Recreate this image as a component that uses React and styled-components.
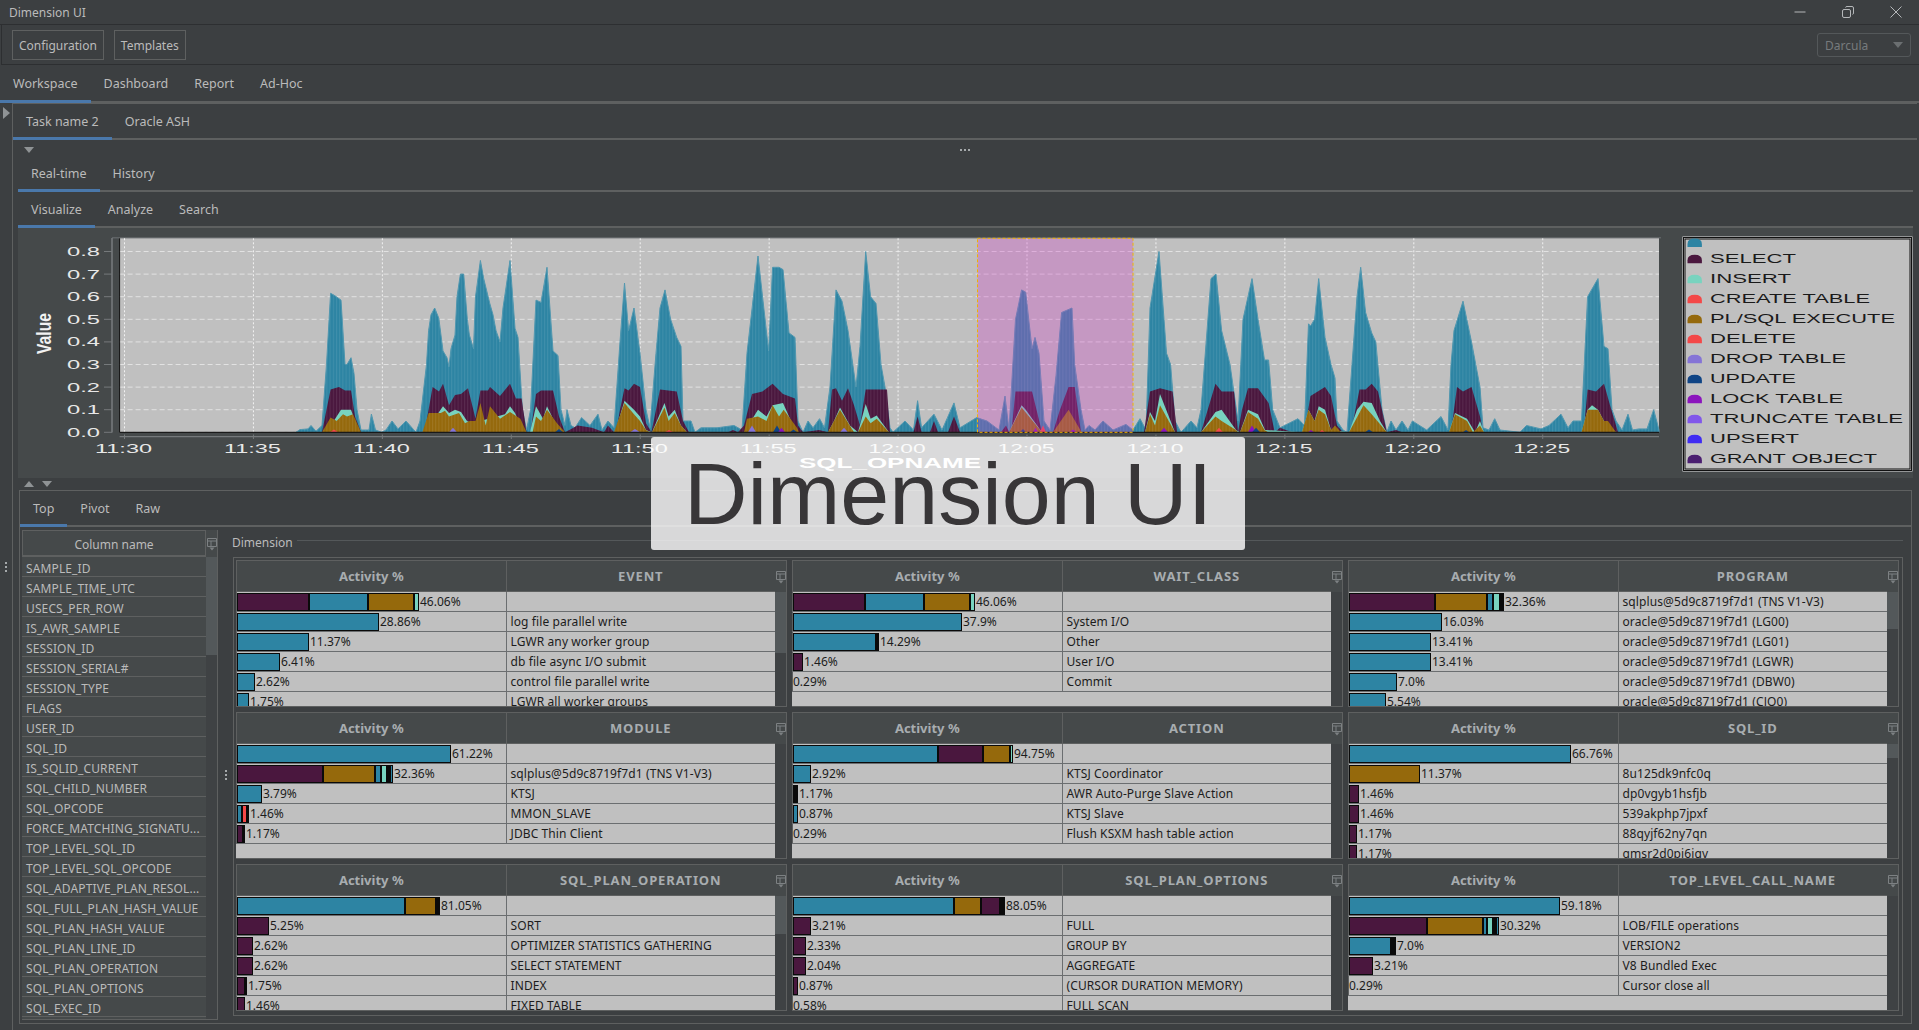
import React from "react";
import styled, { createGlobalStyle } from "styled-components";

const LINE = "#5e6060";
const TEXT = "#bbbbbb";
const COLORS = {
  T: "#2d84a3",
  P: "#4a173e",
  M: "#78d3bf",
  R: "#f44848",
  O: "#95690c",
  D: "#8574d6",
  U: "#0f4485",
  L: "#8b14bd",
  C: "#8157ea",
  S: "#3f2bf2",
  G: "#4a1e70",
  K: "#0a0a0a",
};

const GlobalStyle = createGlobalStyle`
  html, body {
    margin: 0;
    height: 100%;
    background: #3c3f41;
    overflow: hidden;
  }
  * {
    box-sizing: border-box;
  }
`;

const Page = styled.div`
  position: relative;
  display: flex;
  flex-direction: column;
  height: 1030px;
  background: #3c3f41;
  color: ${TEXT};
  font-family: "Noto Sans", sans-serif;
  font-size: 12px;
`;

const TitleBar = styled.div`
  display: flex;
  align-items: center;
  justify-content: space-between;
  height: 25px;
  padding: 0 17px 0 9px;
  border-bottom: 1px solid #2d2f31;
`;

const WindowButtons = styled.div`
  display: flex;
  align-items: center;
  gap: 36px;
`;

const Toolbar = styled.div`
  display: flex;
  align-items: center;
  gap: 10px;
  height: 40px;
  margin-left: 1px;
  padding: 1px 8px 0 10px;
  border-left: 1px solid #2d2f31;
  border-bottom: 1px solid #2d2f31;
`;

const ToolButton = styled.div`
  display: flex;
  align-items: center;
  height: 30px;
  padding: 0 6px;
  border: 1px solid ${LINE};
`;

const Combo = styled.div`
  display: flex;
  align-items: center;
  justify-content: space-between;
  width: 94px;
  height: 24px;
  margin-left: auto;
  padding: 0 7px;
  border: 1px solid #54585a;
  border-radius: 3px;
  color: #777b7d;
`;

const ComboArrow = styled.span`
  width: 0;
  height: 0;
  border-left: 5px solid transparent;
  border-right: 5px solid transparent;
  border-top: 6px solid #6b6f71;
`;

const TabBar = styled.div`
  display: flex;
  flex: none;
  height: ${(p) => p.$h}px;
  margin-top: ${(p) => p.$top || 0}px;
  border-bottom: 2px solid ${LINE};
`;

const Tab = styled.div`
  display: flex;
  align-items: center;
  height: calc(100% + 2px);
  padding: 2px 13px ${(p) => p.$lift || 0}px;
  font-size: 12.5px;
  border-bottom: 3px solid ${(p) => (p.$active ? "#4a78ab" : "transparent")};
`;

const Workspace = styled.div`
  display: flex;
  flex: 1;
  min-height: 0;
`;

const LeftStrip = styled.div`
  display: grid;
  grid-template-rows: 1fr auto 1fr;
  justify-items: center;
  flex: none;
  width: 12px;
`;

const SideArrow = styled.span`
  width: 0;
  height: 0;
  margin-top: 4px;
  border-top: 6px solid transparent;
  border-bottom: 6px solid transparent;
  border-left: 7px solid #8f9395;
`;

const Dots = styled.div`
  display: flex;
  flex-direction: ${(p) => (p.$row ? "row" : "column")};
  gap: 2px;
  align-self: center;
  justify-self: center;
`;

const Dot = styled.span`
  width: 2px;
  height: 2px;
  background: #a5a9ab;
`;

const TaskPanel = styled.div`
  display: flex;
  flex: 1;
  flex-direction: column;
  min-width: 0;
  margin-right: 2px;
  border-left: 1px solid ${LINE};
  border-top: 1px solid ${LINE};
`;

const CollapseRow = styled.div`
  display: grid;
  grid-template-columns: 1fr auto 1fr;
  align-items: center;
  flex: none;
  height: 17px;
  padding-top: 3px;
`;

const CollapseSlot = styled.div`
  padding-left: 11px;
`;

const Triangle = styled.span`
  display: block;
  width: 0;
  height: 0;
  border-left: 5px solid transparent;
  border-right: 5px solid transparent;
  ${(p) =>
    p.$up
      ? "border-bottom: 6px solid #8f9395;"
      : "border-top: 6px solid #8f9395;"}
`;

const Inner = styled.div`
  display: flex;
  flex: 1;
  flex-direction: column;
  min-height: 0;
  padding: 0 4px 0 5px;
`;

const ChartPanel = styled.div`
  flex: none;
  height: 250px;
  background: #45494a;
`;

const ChartSvg = styled.svg`
  display: block;
`;

const SplitStrip = styled.div`
  display: flex;
  align-items: center;
  flex: none;
  gap: 8px;
  height: 12px;
  padding-left: 6px;
`;

const BottomPanel = styled.div`
  display: flex;
  flex-direction: column;
  flex: none;
  height: 534px;
  margin-left: 1px;
  margin-right: 1px;
  border: 1px solid ${LINE};
`;

const BottomBody = styled.div`
  display: flex;
  flex: 1;
  min-height: 0;
  padding: 3px 8px 3px 2px;
`;

const Sidebar = styled.div`
  display: flex;
  flex: none;
  width: 196px;
  border: 1px solid ${LINE};
  border-top: 0;
  border-left: 0;
`;

const ColumnList = styled.div`
  display: flex;
  flex: 1;
  flex-direction: column;
  background: #45494a;
`;

const ColumnHead = styled.div`
  display: flex;
  align-items: center;
  justify-content: center;
  flex: none;
  height: 27px;
  padding-top: 2px;
  border: 1px solid ${LINE};
  border-bottom-width: 2px;
`;

const ColumnRow = styled.div`
  display: flex;
  align-items: center;
  flex: none;
  height: 20px;
  padding: 3px 0 0 4px;
  border-bottom: 1px solid ${LINE};
  letter-spacing: 0.12px;
  white-space: nowrap;
`;

const Scroll = styled.div`
  display: flex;
  flex-direction: column;
  flex: none;
  width: 11px;
  background: #3f4244;
`;

const ScrollCorner = styled.div`
  display: flex;
  align-items: center;
  justify-content: center;
  flex: none;
  height: ${(p) => p.$h}px;
  background: #45494a;
`;

const ScrollThumb = styled.div`
  flex: none;
  height: ${(p) => p.$h}px;
  background: #53585a;
`;

const Splitter = styled.div`
  display: flex;
  align-items: center;
  justify-content: center;
  flex: none;
  width: 15px;
`;

const Dimension = styled.div`
  display: flex;
  flex: 1;
  flex-direction: column;
  min-width: 0;
`;

const LegendRow = styled.div`
  display: flex;
  align-items: center;
  flex: none;
  gap: 4px;
  height: 27px;
  margin-left: -1px;
  padding-bottom: 3px;
  white-space: nowrap;
`;

const LegendLine = styled.span`
  flex: 1;
  height: 1px;
  margin-top: -4px;
  background: #54585a;
`;

const FieldBox = styled.div`
  display: grid;
  flex: none;
  grid-template-columns: repeat(3, 1fr);
  grid-template-rows: repeat(3, 1fr);
  gap: 5px;
  height: 459px;
  padding: 2px 3px 4px 2px;
  border: 1px solid ${LINE};
`;

const Card = styled.div`
  display: flex;
  min-width: 0;
  min-height: 0;
  overflow: hidden;
  border: 1px solid ${LINE};
  border-left: 0;
`;

const CardTable = styled.div`
  display: flex;
  flex: 1;
  flex-direction: column;
  min-width: 0;
  background: #c0c0c0;
`;

const HeaderRow = styled.div`
  display: grid;
  grid-template-columns: 1fr 1fr;
  flex: none;
  height: 31px;
  background: #45494a;
  border-bottom: 1px solid ${LINE};
`;

const HeaderCell = styled.div`
  display: flex;
  align-items: center;
  justify-content: center;
  border-left: 1px solid ${LINE};
  color: #a8adb0;
  font-weight: 700;
  font-size: 13px;
  letter-spacing: ${(p) => (p.$caps ? "0.85px" : "0")};
`;

const DataRow = styled.div`
  display: grid;
  grid-template-columns: 1fr 1fr;
  flex: none;
  height: 20px;
  border-bottom: 1px solid #6b6e70;
`;

const BarCell = styled.div`
  display: flex;
  align-items: center;
  border-left: 1px solid ${LINE};
  color: #1c1c1c;
  white-space: nowrap;
`;

const LabelCell = styled.div`
  display: flex;
  align-items: center;
  padding-left: 4px;
  border-left: 1px solid #6b6e70;
  color: #1c1c1c;
  letter-spacing: 0.1px;
  white-space: nowrap;
`;

const Bar = styled.div`
  display: flex;
  flex: none;
  height: 18px;
  margin-right: 1px;
`;

const Segment = styled.div`
  flex: none;
  width: ${(p) => p.$w}px;
  background: ${(p) => COLORS[p.$c]};
  border: 1px solid #0a0a0a;
`;

const Splash = styled.div`
  position: absolute;
  left: 651px;
  top: 437px;
  display: flex;
  align-items: center;
  justify-content: center;
  width: 594px;
  height: 113px;
  border-radius: 3px;
  background: rgba(255, 255, 255, 0.8);
  color: #383638;
  font-family: "Liberation Sans", sans-serif;
  font-size: 88px;
`;

const teal = [
  296,0, 300,.012, 308,.015, 311,.03, 316,.005, 322,.03, 326.5,.3, 330.6,.615, 334.7,.605, 341,.585, 345,.3, 347,.3, 351,.33, 354,.26, 357,.1, 361,.01, 369,.01, 371.4,.08, 375.5,.01, 381.6,0,
  386,.01, 392,.05, 398,.015, 406,.05, 412,.02, 416,0, 420,.05, 426.5,.3, 428.6,.45, 431,.52, 434.7,.55, 438.8,.505, 443,.36, 447,.33, 449,.29, 451,.37, 455,.43, 457,.6, 460.4,.7, 463.7,.7, 467.3,.5, 469.4,.43, 473.5,.37, 475.5,.6, 480.4,.76, 483.7,.68, 489.8,.57, 493,.52, 496,.45, 500,.4, 503,.55, 510,.76, 515,.46, 518,.42, 522.4,.1, 526.5,.01, 530.6,.1, 536,.585, 541,.575, 547,.73, 553,.36, 558,.34, 561,.1, 565,.03, 567,.1, 571,.03, 575,.02, 581.6,.065, 590,.03, 598,.08, 602,.01, 608,.05, 614,.02,
  620,.4, 624.5,.66, 628.6,.45, 634,.55, 640,.35, 646,.1, 650,.02, 656,.35, 660,.55, 665,.63, 670.6,.5, 676.7,.42, 681,.38, 683,.05, 691,.05, 695,0, 701,.02, 717,.02, 734,.03, 742,.01, 747,.35, 758,.78, 768.6,.36, 772.6,.73, 779,.73, 783,.72, 789,.44, 795,.42, 798,.05, 803,0, 808,.05, 813,.02, 819.6,.06, 824.5,.02, 830,.2, 836,.63, 842,.58, 848,.45, 856,.2, 860,.38, 865.7,.8, 870.6,.6, 876,.57, 881,.3, 885,.2, 890,.02, 893,0,
  905,.05, 913.5,.01, 917.6,.14, 921.6,.02, 934,.08, 942,.01, 954,.13, 960,.02, 976.7,.065, 987,.05, 999,.01, 1005,.16, 1009,.01, 1015.5,.5, 1021.6,.63, 1025.7,.62, 1032,.37, 1035,.42, 1039,.35, 1044,.05, 1050,.01, 1056,.25, 1061.6,.53, 1072,.55, 1074.7,.3, 1081,.1, 1085,.01, 1089,.03, 1095,.01, 1103,.05, 1113,.01, 1126,.035, 1133,.01, 1140,.06, 1146,.01, 1150,.55, 1159,.8, 1166.5,.35, 1170.6,.3, 1175,.05, 1181,0,
  1191,.05, 1197,.02, 1201,.1, 1211,.68, 1216,.7, 1221.6,.45, 1230,.3, 1238,.05, 1243,.5, 1252,.68, 1258,.5, 1264.5,.32, 1268.6,.32, 1272.7,.1, 1280,.02, 1298,.06, 1304.5,.03, 1308.5,.48, 1310.5,.47, 1314.6,.5, 1318.7,.68, 1325,.42, 1331,.3, 1335,.24, 1337,.05, 1343,.01, 1347,0, 1352,.3, 1357,.6, 1360.7,.73, 1365.6,.53, 1371.7,.44, 1375.8,.4, 1382,.1, 1386.8,0, 1391,.05, 1396,.01, 1402,.05, 1408,.01, 1412.4,.05, 1426.7,.01, 1441,.07, 1448,.01, 1451,.3, 1454,.45, 1463,.58, 1471.5,.4, 1480,.2, 1483,.02, 1489,.01, 1494.7,.06, 1500,.01, 1520,0, 1526.5,.03, 1541,.015, 1549,.03, 1561,.08, 1568,.02, 1573,.05, 1581.5,.05, 1587.6,.6, 1598,.68, 1604,.38, 1608,.37, 1612,.1, 1616,.05, 1622,.01, 1628,.08, 1632.5,.01, 1639,.015, 1647,.015, 1653.7,.1, 1659,.01,
];

const purple = [
  322,0, 326.5,.1, 330.6,.19, 339,.2, 345,.185, 351,.185, 355,.07, 361,0,
  424.5,0, 428.6,.1, 432.6,.2, 439,.18, 443,.215, 449,.12, 455,.165, 461,.17, 468,.195, 475.5,.06, 480.4,.185, 488,.185, 490,.2, 500,.16, 510,.215, 516,.15, 521.6,.15, 526.5,0,
  530.6,0, 536,.17, 541,.185, 553,.185, 559,.07, 565,0, 573.5,.02, 577.5,.03, 592,.02, 604,0, 608,.03, 614,0,
  616,0, 620,.1, 624.5,.195, 628.6,.185, 634,.215, 640,.2, 646,.04, 651.4,0, 656,.1, 660,.19, 676.7,.18, 683,.05, 689,0,
  728,0, 733,.01, 738,0, 744,.03, 752,.17, 762.4,.18, 772.6,.215, 783,.17, 795,.15, 798,.03, 803,0, 819,.01, 828,0, 832,.19, 836,.195, 842,.14, 848,.195, 854,.12, 860,.03, 865.7,.19, 887,.19, 890,0,
  913.5,0, 917.6,.07, 921.6,0, 930,0, 934,.05, 938,0, 948,0, 954,.07, 960,0, 1001,0, 1006,.03, 1009,0, 1011.4,0, 1015.5,.18, 1032,.18, 1042,0, 1053,0, 1060,.1, 1068.6,.2, 1074.7,.2, 1081,0,
  1144,0, 1150,.18, 1160,.195, 1172.6,.18, 1177,0, 1201,0, 1215.5,.215, 1221.6,.18, 1234,.18, 1238,0, 1242,.1, 1248,.195, 1258,.195, 1268.6,.13, 1274.7,0, 1280,.02, 1292,0,
  1304.5,0, 1310.5,.16, 1325,.2, 1331,.16, 1337,.03, 1343,0, 1351,0, 1359.5,.19, 1365.6,.19, 1371.7,.215, 1378,.18, 1386.8,0, 1396,.01, 1402,0, 1451,0, 1457,.2, 1463,.18, 1471.5,.2, 1480,.07, 1483,0, 1583.6,0, 1587.6,.19, 1596,.18, 1604,.215, 1610,.12, 1618,0,
];

const mint = [
  326.5,0, 341,.1, 351,.1, 359,0, 426,0, 439,.09, 443,.115, 449,.085, 455,.1, 461,.09, 467,.05, 472,.04, 505,.08, 510,.115, 515,.085, 524,0,
  530,0, 536,.115, 543,.06, 547,.115, 553,.06, 562,0, 615,0, 624.5,.14, 634,.1, 640,.07, 646,.01, 652,0, 664.5,.13, 668.6,.07, 674.7,.1, 681,.03, 687,0,
  744,0, 758,.1, 766.5,.07, 772.6,.12, 783,.13, 791,.05, 798,0, 828,0, 834,.05, 840,.11, 850,.03, 858,0, 865.7,.125, 870.6,.06, 876.7,.075, 889,0,
  1009,0, 1021.6,.12, 1025.7,.1, 1042,0, 1145,0, 1150,.09, 1155,.05, 1160,.17, 1175,0, 1201,0, 1215.5,.09, 1221.6,.1, 1236,.01, 1240,0, 1248,.1, 1258,.08, 1265,.01, 1302,0, 1308.5,.1, 1314.6,.05, 1318.7,.115, 1325,.1, 1331,.01, 1349,0, 1357,.1, 1363.5,.135, 1371.7,.13, 1380,.05, 1386.8,0, 1449,0, 1455,.085, 1467,.06, 1475,0, 1480,.05, 1484,0, 1581.5,0, 1587.6,.1, 1592,.12, 1598,.1, 1604,.05, 1616,0,
];

const orange = [
  322,0, 330.6,.065, 336.7,.05, 343,.08, 347,.07, 353,.08, 361,0, 422.4,0, 428.6,.085, 440.8,.085, 445,.095, 449,.07, 459,.085, 465,.04, 469.4,.05, 475.5,.05, 480.4,.13, 485.7,.03, 490,.115, 500,.06, 510,.09, 520.4,.06, 526.5,0,
  532.6,0, 536,.07, 541,.05, 547,.1, 557,.04, 565,0, 614,0, 624.5,.13, 634,.08, 640,.05, 646,.01, 650,0, 652,0, 664.5,.11, 668.6,.05, 674.7,.085, 681,.03, 687,0,
  744,0, 747,.06, 758,.07, 766.5,.05, 772.6,.12, 779,.07, 783.7,.1, 797,.02, 799,0, 828,0, 840,.1, 854,0, 858,0, 865.7,.07, 870.6,.04, 876.7,.06, 889,0,
  1009,0, 1021.6,.11, 1042,0, 1053,0, 1068.6,.1, 1081.6,0, 1145,0, 1150,.08, 1155,.03, 1160,.12, 1175,0, 1201,0, 1215.5,.07, 1221.6,.05, 1236,.01, 1238,0, 1240,0, 1248,.09, 1258,.06, 1264.5,.01, 1268,0,
  1302,0, 1308.5,.1, 1314.6,.05, 1318.7,.1, 1325,.08, 1331,.01, 1335,.03, 1341,0, 1349,0, 1363.5,.12, 1371.7,.08, 1386.8,0, 1449,0, 1455,.08, 1467,.05, 1473,0, 1480,.03, 1484,0, 1581.5,0, 1587.6,.1, 1598,.1, 1604,.05, 1608,.05, 1616,0,
];

const blips = [
  [330, 8, 0.012, "R"], [449, 8, 0.02, "D"], [555, 8, 0.015, "U"], [630, 10, 0.015, "D"], [665, 8, 0.01, "R"],
  [748, 8, 0.03, "D"], [773, 8, 0.03, "U"], [778, 7, 0.02, "L"], [790, 7, 0.012, "U"], [840, 8, 0.02, "D"],
  [1020, 6, 0.015, "U"], [1033, 5, 0.02, "L"], [1040, 6, 0.03, "R"], [1069, 8, 0.012, "L"], [1160, 8, 0.02, "L"],
  [1215, 8, 0.02, "R"], [1248, 8, 0.03, "L"], [1252, 8, 0.02, "U"], [1319, 6, 0.01, "R"], [1308, 6, 0.01, "L"],
  [1365, 8, 0.012, "U"], [1463, 6, 0.01, "U"],
];

const BASE = 432.3;
const valueY = (v) => BASE - v * 226;

const areaPath = (pts) => {
  let d = `M${pts[0]} ${BASE}`;
  for (let i = 0; i < pts.length; i += 2) {
    d += `L${pts[i]} ${valueY(pts[i + 1]).toFixed(1)}`;
  }
  return `${d}L${pts[pts.length - 2]} ${BASE}Z`;
};

const yTicks = [0, 1, 2, 3, 4, 5, 6, 7, 8];
const xTicks = ["11:30", "11:35", "11:40", "11:45", "11:50", "11:55", "12:00", "12:05", "12:10", "12:15", "12:20", "12:25"];

const legend = [
  ["", "T", 0],
  ["SELECT", "P", 86],
  ["INSERT", "M", 81],
  ["CREATE TABLE", "R", 160],
  ["PL/SQL EXECUTE", "O", 185],
  ["DELETE", "R", 86],
  ["DROP TABLE", "D", 136],
  ["UPDATE", "U", 86],
  ["LOCK TABLE", "L", 133],
  ["TRUNCATE TABLE", "C", 193],
  ["UPSERT", "S", 89],
  ["GRANT OBJECT", "G", 167],
];

const legendBottom = (i) => (i === 0 ? 247 : 263.3 + (i - 1) * 20);

const Chart = () => (
  <ChartSvg width="1895" height="250" viewBox="18 228 1895 250">
    <defs>
      <pattern id="stripes" width="3.2" height="10" patternUnits="userSpaceOnUse">
        <rect width="1" height="10" fill="#fff" opacity="0.09" />
      </pattern>
    </defs>
    <rect x="112" y="237" width="1549" height="1.5" fill="#5f6365" />
    <rect x="119.6" y="238.3" width="1539.4" height="194" fill="#c0c0c0" />
    {yTicks.map((t) => (
      <line key={t} x1="119.6" x2="1659" y1={valueY(t / 10)} y2={valueY(t / 10)} stroke="#e2e2e2" strokeDasharray="5 3" />
    ))}
    {xTicks.map((t, i) => (
      <line key={t} x1={124.5 + i * 128.93} x2={124.5 + i * 128.93} y1="238.3" y2="432" stroke="#f2f2f2" strokeDasharray="2 2" />
    ))}
    <path d={areaPath(teal)} fill={COLORS.T} stroke="#4f96ae" strokeWidth="1" />
    <path d={areaPath(teal)} fill="url(#stripes)" />
    <path d={areaPath(purple)} fill={COLORS.P} />
    <path d={areaPath(purple)} fill="url(#stripes)" />
    <path d={areaPath(mint)} fill={COLORS.M} />
    <path d={areaPath(orange)} fill={COLORS.O} />
    <path d={areaPath(orange)} fill="url(#stripes)" />
    {blips.map(([x, w, v, c]) => (
      <path key={x} d={`M${x} ${BASE}L${x + w / 2} ${valueY(v)}L${x + w} ${BASE}Z`} fill={COLORS[c]} />
    ))}
    <line x1="119.6" x2="119.6" y1="238.3" y2="432.6" stroke="#111" />
    <line x1="119.6" x2="1659" y1="432.3" y2="432.3" stroke="#1a1a1a" strokeWidth="1.2" />
    <rect x="977.5" y="238.3" width="155.5" height="194" fill="#d23cc8" fillOpacity="0.3" stroke="#f0b400" strokeDasharray="3 2" />

    <line x1="112" x2="112" y1="238" y2="432.5" stroke="#75797b" strokeWidth="1.6" />
    <line x1="119.6" x2="1659" y1="436.7" y2="436.7" stroke="#75797b" strokeWidth="1.2" />
    {yTicks.map((t) => (
      <g key={t}>
        <line x1="104" x2="112" y1={valueY(t / 10)} y2={valueY(t / 10)} stroke="#75797b" />
        <text x="67" y={valueY(t / 10) + 4.5} textLength="33" lengthAdjust="spacingAndGlyphs" fontFamily="Liberation Sans" fontSize="12.5" fill="#e8e8e8">
          {(t / 10).toFixed(1)}
        </text>
      </g>
    ))}
    {xTicks.map((t, i) => (
      <g key={t}>
        <line x1={124.5 + i * 128.93} x2={124.5 + i * 128.93} y1="434.5" y2="439" stroke="#75797b" />
        <text x={95 + i * 128.93} y="453" textLength="57" lengthAdjust="spacingAndGlyphs" fontFamily="Liberation Sans" fontSize="13.5" fill="#e8e8e8">
          {t}
        </text>
      </g>
    ))}
    <text transform="translate(51 354) rotate(-90)" textLength="41" lengthAdjust="spacingAndGlyphs" fontFamily="Liberation Sans" fontSize="20" fontWeight="700" fill="#f2f2f2">
      Value
    </text>
    <text x="799" y="467.5" textLength="182" lengthAdjust="spacingAndGlyphs" fontFamily="Liberation Sans" fontSize="14" fontWeight="700" fill="#fff">
      SQL_OPNAME
    </text>

    <rect x="1682.5" y="236.5" width="230" height="235" fill="#e2e2e2" />
    <rect x="1683.5" y="237.5" width="228" height="233" fill="#c0c0c0" stroke="#111" />
    <rect x="1685" y="239" width="225" height="230" fill="#c0c0c0" stroke="#111" />
    {legend.map(([name, c, w], i) => (
      <g key={c + i}>
        <path d={`M1687.5 ${legendBottom(i)}v-3q0 -5.5 7.2 -5.5q7.2 0 7.2 5.5v3Z`} fill={COLORS[c]} />
        {name && (
          <text x="1710" y={legendBottom(i)} textLength={w} lengthAdjust="spacingAndGlyphs" fontFamily="Liberation Sans" fontSize="13.5" fill="#1a1a1a">
            {name}
          </text>
        )}
      </g>
    ))}
  </ChartSvg>
);

const HeaderIcon = () => (
  <svg width="10" height="14" viewBox="0 0 10 14" fill="none" stroke="#7d8183">
    <path d="M.5 1.5h9v8h-9zM.5 4h9M4 4v5.5" />
    <path d="M2.5 10.5h5L5 13.5z" fill="#7d8183" stroke="none" />
  </svg>
);

const MinusIcon = () => (
  <svg width="12" height="12" viewBox="0 0 12 12" stroke="#b5b8ba">
    <path d="M.5 6h11" />
  </svg>
);

const RestoreIcon = () => (
  <svg width="12" height="12" viewBox="0 0 12 12" fill="none" stroke="#b5b8ba">
    <rect x=".5" y="3.5" width="8" height="8" rx="1.5" />
    <path d="M3.5 1.5Q3.7.5 5 .5h5q1.5 0 1.5 1.5v5q0 1.2-1 1.4" />
  </svg>
);

const CloseIcon = () => (
  <svg width="12" height="12" viewBox="0 0 12 12" stroke="#b5b8ba">
    <path d="M.5.5l11 11M11.5.5l-11 11" />
  </svg>
);

const columns = [
  "SAMPLE_ID", "SAMPLE_TIME_UTC", "USECS_PER_ROW", "IS_AWR_SAMPLE", "SESSION_ID", "SESSION_SERIAL#", "SESSION_TYPE", "FLAGS",
  "USER_ID", "SQL_ID", "IS_SQLID_CURRENT", "SQL_CHILD_NUMBER", "SQL_OPCODE", "FORCE_MATCHING_SIGNATU...", "TOP_LEVEL_SQL_ID",
  "TOP_LEVEL_SQL_OPCODE", "SQL_ADAPTIVE_PLAN_RESOL...", "SQL_FULL_PLAN_HASH_VALUE", "SQL_PLAN_HASH_VALUE", "SQL_PLAN_LINE_ID",
  "SQL_PLAN_OPERATION", "SQL_PLAN_OPTIONS", "SQL_EXEC_ID",
];

const ORACLE = "oracle@5d9c8719f7d1";
const SQLPLUS = "sqlplus@5d9c8719f7d1 (TNS V1-V3)";

const cards = [
  {
    title: "EVENT",
    thumb: 61,
    rows: [
      ["46.06%", "", [["P", 72], ["T", 59], ["O", 46], ["M", 5]]],
      ["28.86%", "log file parallel write", [["T", 142]]],
      ["11.37%", "LGWR any worker group", [["T", 72]]],
      ["6.41%", "db file async I/O submit", [["T", 43]]],
      ["2.62%", "control file parallel write", [["T", 18]]],
      ["1.75%", "LGWR all worker groups", [["T", 12]]],
    ],
  },
  {
    title: "WAIT_CLASS",
    rows: [
      ["46.06%", "", [["P", 72], ["T", 59], ["O", 46], ["M", 5]]],
      ["37.9%", "System I/O", [["T", 169]]],
      ["14.29%", "Other", [["T", 83], ["K", 3]]],
      ["1.46%", "User I/O", [["P", 10]]],
      ["0.29%", "Commit", []],
    ],
  },
  {
    title: "PROGRAM",
    thumb: 37,
    rows: [
      ["32.36%", SQLPLUS, [["P", 86], ["O", 52], ["T", 6], ["M", 7], ["K", 2], ["T", 2]]],
      ["16.03%", `${ORACLE} (LG00)`, [["T", 93]]],
      ["13.41%", `${ORACLE} (LG01)`, [["T", 82]]],
      ["13.41%", `${ORACLE} (LGWR)`, [["T", 82]]],
      ["7.0%", `${ORACLE} (DBW0)`, [["T", 48]]],
      ["5.54%", `${ORACLE} (CJQ0)`, [["T", 37]]],
    ],
  },
  {
    title: "MODULE",
    rows: [
      ["61.22%", "", [["T", 214]]],
      ["32.36%", SQLPLUS, [["P", 86], ["O", 52], ["T", 6], ["M", 6], ["K", 3], ["T", 3]]],
      ["3.79%", "KTSJ", [["T", 25]]],
      ["1.46%", "MMON_SLAVE", [["T", 5], ["R", 5], ["S", 2]]],
      ["1.17%", "JDBC Thin Client", [["P", 6], ["T", 2]]],
    ],
  },
  {
    title: "ACTION",
    rows: [
      ["94.75%", "", [["T", 145], ["P", 45], ["O", 27], ["M", 3]]],
      ["2.92%", "KTSJ Coordinator", [["T", 18]]],
      ["1.17%", "AWR Auto-Purge Slave Action", [["K", 3], ["R", 2]]],
      ["0.87%", "KTSJ Slave", [["T", 5]]],
      ["0.29%", "Flush KSXM hash table action", []],
    ],
  },
  {
    title: "SQL_ID",
    thumb: 14,
    rows: [
      ["66.76%", "", [["T", 222]]],
      ["11.37%", "8u125dk9nfc0q", [["O", 71]]],
      ["1.46%", "dp0vgyb1hsfjb", [["P", 10]]],
      ["1.46%", "539akphp7jpxf", [["P", 10]]],
      ["1.17%", "88qyjf62ny7qn", [["P", 8]]],
      ["1.17%", "gmsr2d0pj6jqv", [["P", 8]]],
    ],
  },
  {
    title: "SQL_PLAN_OPERATION",
    thumb: 38,
    rows: [
      ["81.05%", "", [["T", 168], ["O", 31], ["K", 4]]],
      ["5.25%", "SORT", [["P", 32]]],
      ["2.62%", "OPTIMIZER STATISTICS GATHERING", [["P", 16]]],
      ["2.62%", "SELECT STATEMENT", [["P", 16]]],
      ["1.75%", "INDEX", [["P", 8], ["K", 2]]],
      ["1.46%", "FIXED TABLE", [["P", 8]]],
    ],
  },
  {
    title: "SQL_PLAN_OPTIONS",
    rows: [
      ["88.05%", "", [["T", 161], ["O", 27], ["P", 19], ["K", 3], ["R", 2]]],
      ["3.21%", "FULL", [["P", 18]]],
      ["2.33%", "GROUP BY", [["P", 13]]],
      ["2.04%", "AGGREGATE", [["P", 13]]],
      ["0.87%", "(CURSOR DURATION MEMORY)", [["P", 5]]],
      ["0.58%", "FULL SCAN", []],
    ],
  },
  {
    title: "TOP_LEVEL_CALL_NAME",
    rows: [
      ["59.18%", "", [["T", 211]]],
      ["30.32%", "LOB/FILE operations", [["P", 78], ["O", 56], ["T", 4], ["M", 6], ["K", 3], ["T", 3]]],
      ["7.0%", "VERSION2", [["T", 42], ["K", 3], ["S", 2]]],
      ["3.21%", "V8 Bundled Exec", [["P", 24]]],
      ["0.29%", "Cursor close all", []],
    ],
  },
];

const ActivityCard = ({ card }) => (
  <Card>
    <CardTable>
      <HeaderRow>
        <HeaderCell>Activity %</HeaderCell>
        <HeaderCell $caps>{card.title}</HeaderCell>
      </HeaderRow>
      {card.rows.map(([pct, label, segments]) => (
        <DataRow key={pct + label}>
          <BarCell>
            {segments.length > 0 && (
              <Bar>
                {segments.map(([c, w], i) => (
                  <Segment key={i} $c={c} $w={w} />
                ))}
              </Bar>
            )}
            {pct}
          </BarCell>
          <LabelCell>{label}</LabelCell>
        </DataRow>
      ))}
    </CardTable>
    <Scroll>
      <ScrollCorner $h={31}>
        <HeaderIcon />
      </ScrollCorner>
      {card.thumb && <ScrollThumb $h={card.thumb} />}
    </Scroll>
  </Card>
);

const VDots = ({ row }) => (
  <Dots $row={row}>
    <Dot />
    <Dot />
    <Dot />
  </Dots>
);

const App = () => (
  <Page>
    <GlobalStyle />
    <TitleBar>
      Dimension UI
      <WindowButtons>
        <MinusIcon />
        <RestoreIcon />
        <CloseIcon />
      </WindowButtons>
    </TitleBar>
    <Toolbar>
      <ToolButton>Configuration</ToolButton>
      <ToolButton>Templates</ToolButton>
      <Combo>
        Darcula
        <ComboArrow />
      </Combo>
    </Toolbar>
    <TabBar $h={36} $top={2}>
      <Tab $active $lift={2}>Workspace</Tab>
      <Tab $lift={2}>Dashboard</Tab>
      <Tab $lift={2}>Report</Tab>
      <Tab $lift={2}>Ad-Hoc</Tab>
    </TabBar>
    <Workspace>
      <LeftStrip>
        <SideArrow />
        <VDots />
      </LeftStrip>
      <TaskPanel>
        <TabBar $h={36}>
          <Tab $active>Task name 2</Tab>
          <Tab>Oracle ASH</Tab>
        </TabBar>
        <CollapseRow>
          <CollapseSlot>
            <Triangle />
          </CollapseSlot>
          <VDots row />
        </CollapseRow>
        <Inner>
          <TabBar $h={35}>
            <Tab $active $lift={2}>Real-time</Tab>
            <Tab $lift={2}>History</Tab>
          </TabBar>
          <TabBar $h={36}>
            <Tab $active>Visualize</Tab>
            <Tab>Analyze</Tab>
            <Tab>Search</Tab>
          </TabBar>
          <ChartPanel>
            <Chart />
          </ChartPanel>
          <SplitStrip>
            <Triangle $up />
            <Triangle />
          </SplitStrip>
          <BottomPanel>
            <TabBar $h={36}>
              <Tab $active>Top</Tab>
              <Tab>Pivot</Tab>
              <Tab>Raw</Tab>
            </TabBar>
            <BottomBody>
              <Sidebar>
                <ColumnList>
                  <ColumnHead>Column name</ColumnHead>
                  {columns.map((c) => (
                    <ColumnRow key={c}>{c}</ColumnRow>
                  ))}
                </ColumnList>
                <Scroll>
                  <ScrollCorner $h={27}>
                    <HeaderIcon />
                  </ScrollCorner>
                  <ScrollThumb $h={98} />
                </Scroll>
              </Sidebar>
              <Splitter>
                <VDots />
              </Splitter>
              <Dimension>
                <LegendRow>
                  Dimension
                  <LegendLine />
                </LegendRow>
                <FieldBox>
                  {cards.map((card) => (
                    <ActivityCard key={card.title} card={card} />
                  ))}
                </FieldBox>
              </Dimension>
            </BottomBody>
          </BottomPanel>
        </Inner>
      </TaskPanel>
    </Workspace>
    <Splash>Dimension UI</Splash>
  </Page>
);

export default App;
